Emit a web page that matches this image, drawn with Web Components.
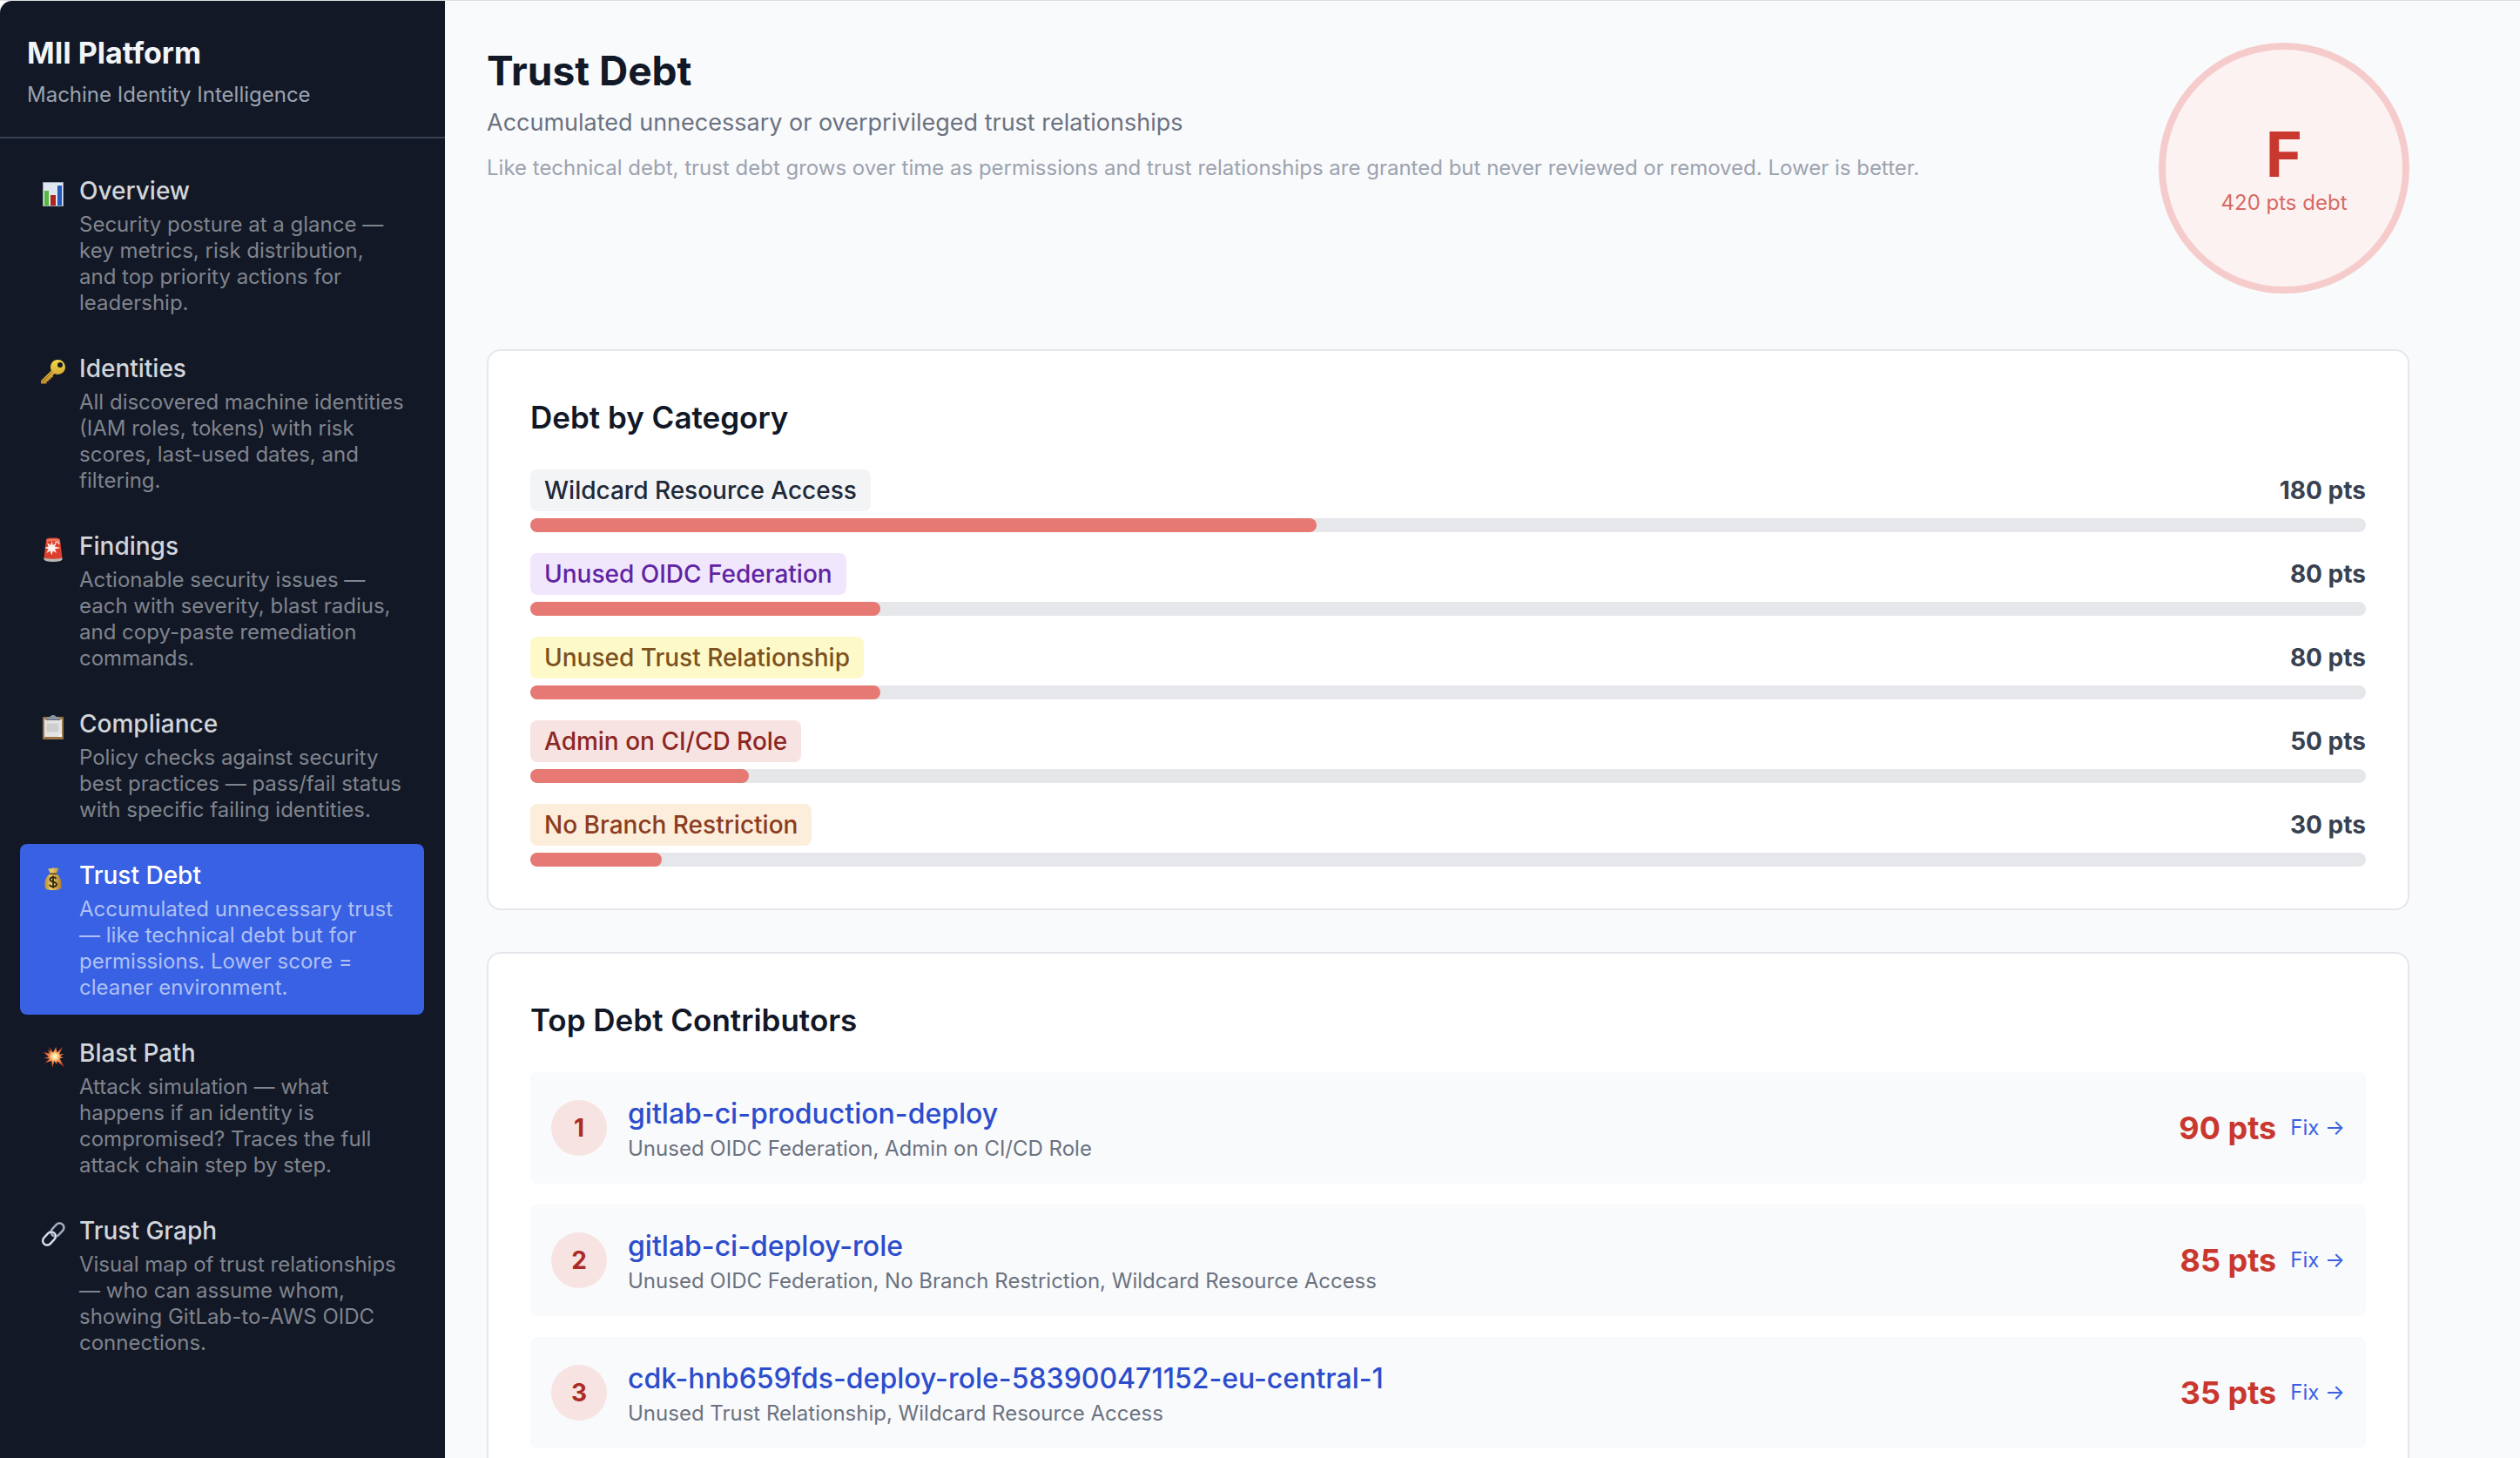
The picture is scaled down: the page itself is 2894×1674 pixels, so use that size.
<!DOCTYPE html>
<html lang="en">
<head>
<meta charset="utf-8">
<title>Trust Debt - MII Platform</title>
<style>
  body {
    margin: 0;
    background: #fff;
    font-family: Inter, "Liberation Sans", sans-serif;
    color: #111827;
  }
</style>
</head>
<body>
<mii-app></mii-app>

<script>
const NAV_ITEMS = [
  {
    icon: "chart",
    title: "Overview",
    text: "Security posture at a glance — key metrics, risk distribution, and top priority actions for leadership.",
  },
  {
    icon: "key",
    title: "Identities",
    text: "All discovered machine identities (IAM roles, tokens) with risk scores, last-used dates, and filtering.",
  },
  {
    icon: "siren",
    title: "Findings",
    text: "Actionable security issues — each with severity, blast radius, and copy-paste remediation commands.",
  },
  {
    icon: "clipboard",
    title: "Compliance",
    text: "Policy checks against security best practices — pass/fail status with specific failing identities.",
  },
  {
    icon: "money",
    title: "Trust Debt",
    text: "Accumulated unnecessary trust — like technical debt but for permissions. Lower score = cleaner environment.",
    active: true,
  },
  {
    icon: "blast",
    title: "Blast Path",
    text: "Attack simulation — what happens if an identity is compromised? Traces the full attack chain step by step.",
  },
  {
    icon: "link",
    title: "Trust Graph",
    text: "Visual map of trust relationships — who can assume whom, showing GitLab-to-AWS OIDC connections.",
  },
];

const TOTAL_DEBT = 420;

const CATEGORIES = [
  { name: "Wildcard Resource Access", points: 180, bg: "#f3f4f6", fg: "#202938" },
  { name: "Unused OIDC Federation", points: 80, bg: "#f1e7fd", fg: "#6023a3" },
  { name: "Unused Trust Relationship", points: 80, bg: "#fdf9c9", fg: "#7c5120" },
  { name: "Admin on CI/CD Role", points: 50, bg: "#f8e3e3", fg: "#8c2822" },
  { name: "No Branch Restriction", points: 30, bg: "#fceeda", fg: "#8c3c1e" },
];

const CONTRIBUTORS = [
  { name: "gitlab-ci-production-deploy", reasons: "Unused OIDC Federation, Admin on CI/CD Role", points: 90 },
  { name: "gitlab-ci-deploy-role", reasons: "Unused OIDC Federation, No Branch Restriction, Wildcard Resource Access", points: 85 },
  { name: "cdk-hnb659fds-deploy-role-583900471152-eu-central-1", reasons: "Unused Trust Relationship, Wildcard Resource Access", points: 35 },
];

// All icons share a 28x28 view box
const ICONS = {
  chart: `
    <rect x="2" width="24" height="28" fill="#9aa5b5"/>
    <rect x="3" y="1" width="22" height="26" fill="#dfe7f1"/>
    <rect x="4" y="10" width="5" height="17" fill="#55b93c"/>
    <rect x="11" y="15" width="6" height="12" fill="#b0241d"/>
    <rect x="19" y="4" width="5" height="23" fill="#2559bd"/>`,
  key: `
    <defs><linearGradient id="g" x1="0" y1="0" x2="0" y2="1">
      <stop offset="0" stop-color="#f7d84a"/><stop offset="1" stop-color="#c08f2a"/>
    </linearGradient></defs>
    <path fill="url(#g)" fill-rule="evenodd" d="M19.500 0a8.500 8.500 0 0 1 0 17c-1.500 0-2.800-.3-3.900-1l-2 2v2.500h-2.400v2.300H8.800V25H6.500v2.500H0V24l11.900-11.600A8.500 8.500 0 0 1 19.500 0zM22 3a3 3 0 1 0 0 6 3 3 0 0 0 0-6z"/>
    <path d="M2 25 13.500 13.800" stroke="#8f661c" stroke-width="1"/>`,
  siren: `
    <path d="M3.500 23h21v2c0 1.800-4 3-10.500 3S3.500 26.800 3.500 25z" fill="#b9b8b4"/>
    <path d="M6 3c.3-2 2-2.500 8-2.500S21.700 1 22 3l2.500 20c-1.500 2.300-19.500 2.300-21 0z" fill="#dc3f2b"/>
    <path d="M6.500 3c2-1.800 13-1.800 15 0l.3 2c-4-1.500-11.600-1.500-15.600 0z" fill="#f07a64"/>
    <path d="m12.500 4 1.300 5 4.200-3-2.200 4.600 6.700 1.400-6.500 1.500 2 4.500-4.200-2.600-1.600 5-1.600-5-4.300 2.500 2.200-4.600-4.500-1.300 4.700-1.500L7 6l4.200 3z" fill="#fff0ed"/>
    <path d="M16 6c3-1.500 5-.5 5 2" fill="none" stroke="#fbd5ce" stroke-width="1.500"/>`,
  clipboard: `
    <rect x="2" y="2" width="24" height="26" rx="1" fill="#9a7547"/>
    <path d="M4 5h20v20H4z" fill="#e4e4e4"/>
    <path d="M7 10h13v9H7zM6 7.500h3" fill="#cfcfcf" stroke="#cfcfcf"/>
    <path d="M20 25l4-4v4z" fill="#fff"/>
    <path d="M6 5V3.500L10 2c.8 0 1.300-2 4-2s3.200 2 4 2l4 1.500V5z" fill="#8b95a3"/>
    <path d="M6 5.500h16" stroke="#5c6470"/>`,
  money: `
    <defs><linearGradient id="m" x1="0" x2="1">
      <stop offset="0" stop-color="#b98c34"/><stop offset=".4" stop-color="#edce68"/><stop offset="1" stop-color="#a87c2d"/>
    </linearGradient></defs>
    <path d="M8 2.500c2-1 3 .5 4.500-.5s2 0 3.500-.3 3-.7 4.500.6L17.500 8C22 11 24 16 23.500 23c-.2 3-3 4-9.500 4s-9.300-1-9.500-4C4 16 6 11 11 8z" fill="url(#m)"/>
    <path d="M10.500 8.300h7.500" stroke="#704d19" stroke-width="2"/>
    <path d="M17.500 14c-.6-1.300-1.800-1.800-3.500-1.800-2 0-3.500.9-3.500 2.600 0 3.700 7.500 1.700 7.500 5.500 0 1.800-1.700 2.700-4 2.700-2 0-3.500-.8-4-2.300M14 10.500v14.300" fill="none" stroke="#2d2514" stroke-width="1.800"/>`,
  blast: `
    <defs><radialGradient id="b" gradientUnits="userSpaceOnUse" cx="16" cy="14" r="14">
      <stop offset="0" stop-color="#fffde0"/><stop offset=".2" stop-color="#ffe39a"/>
      <stop offset=".45" stop-color="#f58d4f"/><stop offset="1" stop-color="#c42d18"/>
    </radialGradient></defs>
    <path fill="url(#b)" d="M9 2.500l5 7L17.300 3l1.200 6.500L25 3l-4 8.500 5.500-.8-4.500 3 4 1.800-4.500.8 5.500 10.200-8.500-7.300L18 23l-2.500-4L13 27l-.7-8L4.500 21.500l5.500-5-7-.5 6-1.800L2.500 9l7.500 1.500L7.500 6l4 3z"/>`,
  link: `
    <g fill="none">
      <g transform="translate(19 9) rotate(-47)">
        <rect x="-8.500" y="-5" width="17" height="10" rx="5" stroke="#7d8696" stroke-width="2.800"/>
        <rect x="-8.500" y="-5" width="17" height="10" rx="5" stroke="#c3ccda" stroke-width="1"/>
      </g>
      <g transform="translate(9.500 19) rotate(-47)">
        <rect x="-8.500" y="-5" width="17" height="10" rx="5" stroke="#939dad" stroke-width="2.800"/>
        <rect x="-8.500" y="-5" width="17" height="10" rx="5" stroke="#eef3fb" stroke-width="1.400"/>
      </g>
    </g>`,
};

class NavIcon extends HTMLElement {
  connectedCallback() {
    this.attachShadow({ mode: "open" }).innerHTML = `
      <style>
        :host { display: block; flex: none; width: 28px; height: 28px; }
        svg { display: block; }
      </style>
      <svg width="28" height="28" viewBox="0 0 28 28" aria-hidden="true">${ICONS[this.getAttribute("name")]}</svg>
    `;
  }
}
customElements.define("nav-icon", NavIcon);

class NavItem extends HTMLElement {
  connectedCallback() {
    this.attachShadow({ mode: "open" }).innerHTML = `
      <style>
        :host { display: block; }
        a {
          display: flex;
          gap: 16px;
          padding: 16px 22px 16px 24px;
          border-radius: 8px;
          color: #d2d5da;
          text-decoration: none;
        }
        nav-icon { margin-top: 10px; }
        .title {
          font-size: 28px;
          line-height: 40px;
          font-weight: 500;
        }
        .text {
          margin-top: 4px;
          font-size: 24px;
          line-height: 30px;
          color: #80848d;
        }
        :host([active]) a { background: #3861e4; color: #fff; }
        :host([active]) .text { color: #afc0f4; }
      </style>
      <a href="#" ${this.hasAttribute("active") ? 'aria-current="page"' : ""}>
        <nav-icon name="${this.getAttribute("icon")}"></nav-icon>
        <div>
          <div class="title">${this.getAttribute("label")}</div>
          <div class="text"><slot></slot></div>
        </div>
      </a>
    `;
  }
}
customElements.define("nav-item", NavItem);

class SideBar extends HTMLElement {
  connectedCallback() {
    const items = NAV_ITEMS.map(
      (item) => `<nav-item icon="${item.icon}" label="${item.title}" ${item.active ? "active" : ""}>${item.text}</nav-item>`
    ).join("");

    this.attachShadow({ mode: "open" }).innerHTML = `
      <style>
        :host {
          display: block;
          box-sizing: border-box;
          flex: none;
          width: 511px;
          background: #121826;
          border-top-left-radius: 14px;
        }
        header {
          padding: 32px 31px;
          border-bottom: 2px solid #384150;
        }
        h1 {
          margin: 0;
          font-size: 34px;
          line-height: 56px;
          font-weight: 700;
          color: #f3f4f6;
        }
        p {
          margin: 4px 0 0;
          font-size: 24px;
          line-height: 32px;
          color: #9ca3af;
        }
        nav {
          display: flex;
          flex-direction: column;
          gap: 8px;
          padding: 24px 24px 24px 23px;
        }
      </style>
      <header>
        <h1>MII Platform</h1>
        <p>Machine Identity Intelligence</p>
      </header>
      <nav>${items}</nav>
    `;
  }
}
customElements.define("side-bar", SideBar);

class GradeBadge extends HTMLElement {
  connectedCallback() {
    this.attachShadow({ mode: "open" }).innerHTML = `
      <style>
        :host {
          display: flex;
          flex: none;
          flex-direction: column;
          align-items: center;
          justify-content: center;
          box-sizing: border-box;
          width: 288px;
          height: 288px;
          border: 8px solid #f5cccb;
          border-radius: 50%;
          background: #fcf2f1;
        }
        .grade {
          font-size: 72px;
          line-height: 80px;
          font-weight: 700;
          color: #c9382f;
        }
        .points {
          font-size: 24px;
          line-height: 32px;
          color: #d66a65;
        }
      </style>
      <div class="grade">${this.getAttribute("grade")}</div>
      <div class="points"><slot></slot></div>
    `;
  }
}
customElements.define("grade-badge", GradeBadge);

class PanelCard extends HTMLElement {
  connectedCallback() {
    this.attachShadow({ mode: "open" }).innerHTML = `
      <style>
        :host {
          display: block;
          padding: 48px;
          background: #fff;
          border: 2px solid #e5e7eb;
          border-radius: 16px;
        }
        h2 {
          margin: 0 0 32px;
          font-size: 35px;
          line-height: 56px;
          font-weight: 600;
        }
        .rows {
          display: flex;
          flex-direction: column;
          gap: 24px;
        }
      </style>
      <h2>${this.getAttribute("heading")}</h2>
      <div class="rows"><slot></slot></div>
    `;
  }
}
customElements.define("panel-card", PanelCard);

class DebtCategory extends HTMLElement {
  connectedCallback() {
    const points = Number(this.getAttribute("points"));
    this.attachShadow({ mode: "open" }).innerHTML = `
      <style>
        :host { display: block; }
        .labels {
          display: flex;
          align-items: center;
          justify-content: space-between;
          margin-bottom: 8px;
          font-size: 28px;
          line-height: 40px;
        }
        .tag {
          padding: 4px 16px;
          border-radius: 8px;
          font-weight: 500;
          background: var(--tag-bg);
          color: var(--tag-fg);
        }
        .points { font-weight: 700; color: #384150; }
        .track {
          height: 16px;
          border-radius: 8px;
          background: #e5e7eb;
        }
        .fill {
          width: ${(points / TOTAL_DEBT) * 100}%;
          height: 100%;
          border-radius: 8px;
          background: #e67973;
        }
      </style>
      <div class="labels">
        <span class="tag"><slot></slot></span>
        <span class="points">${points} pts</span>
      </div>
      <div class="track"><div class="fill"></div></div>
    `;
  }
}
customElements.define("debt-category", DebtCategory);

class DebtContributor extends HTMLElement {
  connectedCallback() {
    this.attachShadow({ mode: "open" }).innerHTML = `
      <style>
        :host {
          display: flex;
          align-items: center;
          gap: 24px;
          padding: 24px;
          border-radius: 8px;
          background: #f9fafc;
        }
        a { text-decoration: none; }
        .rank {
          display: grid;
          place-items: center;
          flex: none;
          width: 64px;
          height: 64px;
          border-radius: 50%;
          background: #f8e3e3;
          color: #ab2c25;
          font-size: 28px;
          font-weight: 700;
        }
        .info { flex: 1; min-width: 0; }
        .name {
          display: block;
          font-size: 32px;
          line-height: 48px;
          font-weight: 500;
          color: #2c4dcc;
        }
        .reasons {
          font-size: 24px;
          line-height: 32px;
          color: #6b7280;
        }
        .score {
          display: flex;
          align-items: center;
          gap: 16px;
        }
        .points {
          font-size: 36px;
          line-height: 56px;
          font-weight: 700;
          color: #c9382f;
        }
        .fix {
          font-size: 24px;
          line-height: 32px;
          color: #3861e4;
        }
      </style>
      <div class="rank">${this.getAttribute("rank")}</div>
      <div class="info">
        <a class="name" href="#">${this.getAttribute("name")}</a>
        <div class="reasons"><slot></slot></div>
      </div>
      <div class="score">
        <span class="points">${this.getAttribute("points")} pts</span>
        <a class="fix" href="#">Fix →</a>
      </div>
    `;
  }
}
customElements.define("debt-contributor", DebtContributor);

class TrustDebtPage extends HTMLElement {
  connectedCallback() {
    const categories = CATEGORIES.map(
      (c) => `<debt-category points="${c.points}" style="--tag-bg: ${c.bg}; --tag-fg: ${c.fg}">${c.name}</debt-category>`
    ).join("");
    const contributors = CONTRIBUTORS.map(
      (c, i) => `<debt-contributor rank="${i + 1}" name="${c.name}" points="${c.points}">${c.reasons}</debt-contributor>`
    ).join("");

    this.attachShadow({ mode: "open" }).innerHTML = `
      <style>
        :host {
          display: block;
          box-sizing: border-box;
          max-width: 2304px;
          padding: 48px;
        }
        header {
          display: flex;
          align-items: flex-start;
          justify-content: space-between;
          margin-bottom: 64px;
        }
        h1 {
          margin: 0;
          font-size: 46px;
          line-height: 64px;
          font-weight: 700;
        }
        p { margin: 0; }
        .subtitle {
          margin-top: 8px;
          font-size: 27px;
          line-height: 40px;
          color: #6b7280;
        }
        .hint {
          margin-top: 16px;
          font-size: 24px;
          line-height: 32px;
          color: #9ca3af;
        }
        .cards {
          display: flex;
          flex-direction: column;
          gap: 48px;
        }
      </style>
      <header>
        <div>
          <h1>Trust Debt</h1>
          <p class="subtitle">Accumulated unnecessary or overprivileged trust relationships</p>
          <p class="hint">Like technical debt, trust debt grows over time as permissions and trust relationships are granted but never reviewed or removed. Lower is better.</p>
        </div>
        <grade-badge grade="F">${TOTAL_DEBT} pts debt</grade-badge>
      </header>
      <div class="cards">
        <panel-card heading="Debt by Category">${categories}</panel-card>
        <panel-card heading="Top Debt Contributors">${contributors}</panel-card>
      </div>
    `;
  }
}
customElements.define("trust-debt-page", TrustDebtPage);

class MiiApp extends HTMLElement {
  connectedCallback() {
    this.attachShadow({ mode: "open" }).innerHTML = `
      <style>
        :host {
          display: flex;
          box-sizing: border-box;
          height: 100vh;
          border-top: 1px solid #dcdddf;
        }
        main {
          flex: 1;
          min-width: 0;
          overflow-y: auto;
          scrollbar-width: none;
          background: #f9fafc;
        }
      </style>
      <side-bar></side-bar>
      <main><trust-debt-page></trust-debt-page></main>
    `;
  }
}
customElements.define("mii-app", MiiApp);
</script>
</body>
</html>
